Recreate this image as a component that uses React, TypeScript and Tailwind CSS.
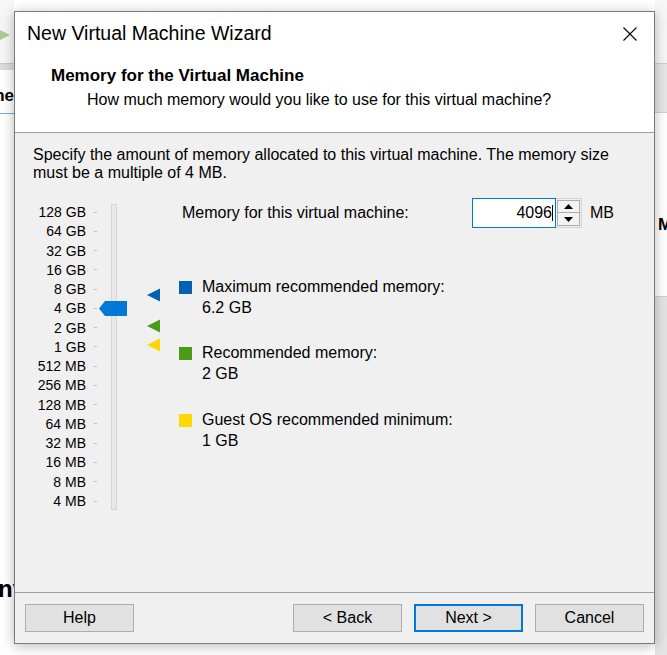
import React from "react";

const ROW_H = 19.27;

const scale = [
  "128 GB",
  "64 GB",
  "32 GB",
  "16 GB",
  "8 GB",
  "4 GB",
  "2 GB",
  "1 GB",
  "512 MB",
  "256 MB",
  "128 MB",
  "64 MB",
  "32 MB",
  "16 MB",
  "8 MB",
  "4 MB",
];

// vertical centre of a value (in MB) on the log2 scale, relative to the scale top
const yFor = (mb: number) => (17 - Math.log2(mb)) * ROW_H + ROW_H / 2;

const markers = [
  { mb: 6.2 * 1024, color: "#0063b1" },
  { mb: 2048, color: "#4b9a1a" },
  { mb: 1024, color: "#fcd600" },
];

const legend = [
  { color: "bg-[#0063b1]", title: "Maximum recommended memory:", value: "6.2 GB", mt: "mt-[48px]" },
  { color: "bg-[#4b9a1a]", title: "Recommended memory:", value: "2 GB", mt: "mt-[24px]" },
  { color: "bg-[#ffd800]", title: "Guest OS recommended minimum:", value: "1 GB", mt: "mt-[25px]" },
];

function WinButton({ label, primary }: { label: string; primary?: boolean }) {
  return (
    <button
      className={
        "h-[28px] w-[109px] bg-[#e1e1e1] text-[16px] leading-none text-black " +
        (primary ? "border-2 border-[#0078d7]" : "border border-[#adadad]")
      }
    >
      {label}
    </button>
  );
}

function MemorySlider() {
  return (
    <div className="relative mt-[4.4px] flex w-[149px] items-start">
      {/* labels with tick marks */}
      <div className="flex w-[67px] flex-col">
        {scale.map((s) => (
          <div key={s} className="flex h-[19.27px] items-center justify-end">
            <span className="text-[14px] leading-none text-black">{s}</span>
            <span className="ml-[8px] h-[1px] w-[3px] bg-[#c4c4c4]" />
          </div>
        ))}
      </div>
      {/* track */}
      <div className="ml-[14px] mt-[1.6px] h-[306px] w-[6px] border border-[#d6d6d6] bg-[#e8e8e8]" />

      {/* thumb at 4 GB */}
      <svg
        className="absolute left-[69px] top-[98.5px]"
        width="28"
        height="15"
        viewBox="0 0 28 15"
      >
        <polygon points="0,7.5 6,0 28,0 28,15 6,15" fill="#0078d7" />
      </svg>

      {/* recommendation markers */}
      {markers.map((m) => (
        <svg
          key={m.color}
          className="absolute left-[117px]"
          style={{ top: yFor(m.mb) - 1.5 - 7 }}
          width="13"
          height="14"
          viewBox="0 0 13 14"
        >
          <polygon points="0,7 13,0.5 13,13.5" fill={m.color} />
        </svg>
      ))}
    </div>
  );
}

function Spinner() {
  return (
    <div className="flex h-[30px] w-[26px] flex-col justify-center border-y border-r border-[#d4d4d4] bg-[#f0f0f0] px-[1px]">
      <div className="flex h-[13px] items-center justify-center border border-[#adadad] bg-[#f3f3f3]">
        <svg width="9" height="5" viewBox="0 0 9 5">
          <polygon points="0,5 4.5,0 9,5" fill="#000" />
        </svg>
      </div>
      <div className="flex h-[13px] items-center justify-center border border-t-0 border-[#adadad] bg-[#f3f3f3]">
        <svg width="9" height="5" viewBox="0 0 9 5">
          <polygon points="0,0 9,0 4.5,5" fill="#000" />
        </svg>
      </div>
    </div>
  );
}

function Wizard() {
  return (
    <div className="absolute left-[14px] top-[11px] flex h-[633px] w-[641px] flex-col border border-[#7a7a7a] bg-[#f0f0f0] shadow-[0_2px_12px_rgba(0,0,0,0.28)]">
      {/* title + page header */}
      <div className="h-[121px] border-b border-[#a0a0a0] bg-white">
        <div className="flex h-[43px] items-center justify-between pl-[12px] pr-[17px]">
          <span className="text-[19.5px] leading-none text-black">New Virtual Machine Wizard</span>
          <svg width="14" height="14" viewBox="0 0 14 14">
            <path d="M0.5 0.5 L13.5 13.5 M13.5 0.5 L0.5 13.5" stroke="#000" strokeWidth="1.1" />
          </svg>
        </div>
        <div className="mt-[10px] pl-[36px] text-[17px] font-bold leading-[22px] text-black">
          Memory for the Virtual Machine
        </div>
        <div className="mt-[2px] pl-[72px] text-[16px] leading-[22px] text-black">
          How much memory would you like to use for this virtual machine?
        </div>
      </div>

      {/* page body */}
      <div className="flex-1 pt-[13px]">
        <p className="pl-[18px] text-[16px] leading-[18px] text-black">
          Specify the amount of memory allocated to this virtual machine. The memory size
          <br />
          must be a multiple of 4 MB.
        </p>

        <div className="mt-[16px] flex pl-[15px]">
          <MemorySlider />

          <div className="flex flex-col">
            <div className="flex h-[30px] items-center">
              <span className="w-[293px] pl-[3px] text-[16px] text-black">
                Memory for this virtual machine:
              </span>
              <div className="flex h-[30px] w-[84px] items-center justify-end border border-[#0078d7] bg-white pr-[2px]">
                <span className="text-[16px] leading-none text-black">4096</span>
                <span className="h-[16px] w-[1px] bg-black" />
              </div>
              <Spinner />
              <span className="ml-[8px] text-[16px] text-black">MB</span>
            </div>

            {legend.map((l) => (
              <div key={l.title} className={"flex " + l.mt}>
                <span className={"mt-[5px] h-[13px] w-[13px] " + l.color} />
                <div className="ml-[10px] text-[16px] leading-[21px] text-black">
                  <div>{l.title}</div>
                  <div>{l.value}</div>
                </div>
              </div>
            ))}
          </div>
        </div>
      </div>

      {/* button bar */}
      <div className="flex h-[51px] items-start border-t border-[#a0a0a0] px-[10px] pt-[11px]">
        <WinButton label="Help" />
        <div className="ml-auto flex gap-[12px]">
          <WinButton label="< Back" />
          <WinButton label="Next >" primary />
          <WinButton label="Cancel" />
        </div>
      </div>
    </div>
  );
}

export default function App() {
  return (
    <div
      className="relative flex h-[655px] w-[667px] overflow-hidden bg-white"
      style={{ fontFamily: '"Liberation Sans", Arial, sans-serif' }}
    >
      {/* host application, left edge */}
      <div className="flex w-[14px] flex-col">
        <div className="flex h-[63px] items-center bg-[#f6f6f6] pt-[6px]">
          <svg width="10" height="16" viewBox="0 0 10 16">
            <polygon points="-6,0 10,8 -6,16" fill="#a6cf8e" />
          </svg>
        </div>
        <div className="h-[7px] border-t border-[#c8c8c8] bg-[#dcdcdc]" />
        <div className="flex h-[43px] justify-end overflow-hidden pt-[16px]">
          <span className="text-[17px] font-bold leading-[20px] text-black">ne</span>
        </div>
        <div className="h-[1px] bg-[#7aaad0]" />
        <div className="h-[463px] bg-white" />
        <div className="h-[24px] overflow-hidden">
          <span className="ml-[-2px] whitespace-nowrap text-[24px] font-bold leading-[24px] text-black">
            nv
          </span>
        </div>
        <div className="flex-1 bg-white" />
      </div>

      <div className="flex-1 bg-white" />

      {/* host application, right edge */}
      <div className="flex w-[12px] flex-col">
        <div className="h-[63px] bg-[#f6f6f6]" />
        <div className="h-[50px] border-y border-[#cfcfcf] bg-[#e6e6e6]" />
        <div className="h-[183px] overflow-hidden bg-white pl-[3px] pt-[100px]">
          <span className="whitespace-nowrap text-[17px] font-bold leading-[20px] text-black">M</span>
        </div>
        <div className="flex-1 border-t border-[#cfcfcf] bg-[#e4e4e4]" />
      </div>

      <Wizard />
    </div>
  );
}
